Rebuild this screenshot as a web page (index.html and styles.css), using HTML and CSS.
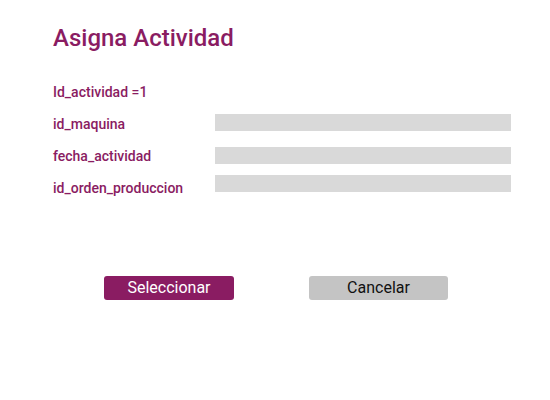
FILE: index.html
```html
<!DOCTYPE html>
<html lang="es">
<head>
<meta charset="utf-8">
<title>Asigna Actividad</title>
<link rel="stylesheet" href="styles.css">
</head>
<body>
<main class="page">
  <h1 class="title">Asigna Actividad</h1>
  <div class="form">
    <div class="row">
      <span class="label">Id_actividad =1</span>
    </div>
    <div class="row">
      <span class="label">id_maquina</span>
      <div class="field field-a"></div>
    </div>
    <div class="row">
      <span class="label">fecha_actividad</span>
      <div class="field field-b"></div>
    </div>
    <div class="row">
      <span class="label">id_orden_produccion</span>
      <div class="field field-c"></div>
    </div>
  </div>
  <div class="actions">
    <button class="btn btn-primary">Seleccionar</button>
    <button class="btn btn-secondary">Cancelar</button>
  </div>
</main>
</body>
</html>
```

FILE: styles.css
```css
html, body {
  margin: 0;
  padding: 0;
  background: #ffffff;
}

.page {
  width: 550px;
  height: 400px;
  box-sizing: border-box;
  padding: 24px 0 0 53px;
  font-family: Roboto, "Liberation Sans", sans-serif;
}

.title {
  margin: 0;
  font-size: 24px;
  font-weight: 500;
  line-height: 28px;
  color: #8a1c62;
}

.form {
  margin-top: 24px;
  display: flex;
  flex-direction: column;
}

.row {
  display: grid;
  grid-template-columns: 162px 296px;
  height: 32px;
}

.label {
  font-size: 14px;
  font-weight: 500;
  line-height: 32px;
  color: #8a1c62;
  white-space: nowrap;
}

.field {
  height: 17px;
  background: #d9d9d9;
}

.field-a { margin-top: 6px; }
.field-b { margin-top: 7px; }
.field-c { margin-top: 3px; }

.actions {
  display: flex;
  gap: 75px;
  margin: 72px 0 0 51px;
}

.btn {
  height: 24px;
  border: none;
  border-radius: 3px;
  font-family: Roboto, "Liberation Sans", sans-serif;
  font-size: 16px;
  line-height: 24px;
  padding: 0;
  cursor: pointer;
}

.btn-primary {
  width: 130px;
  background: #8a1c62;
  color: #ffffff;
}

.btn-secondary {
  width: 139px;
  background: #c4c4c4;
  color: #111111;
}
```
